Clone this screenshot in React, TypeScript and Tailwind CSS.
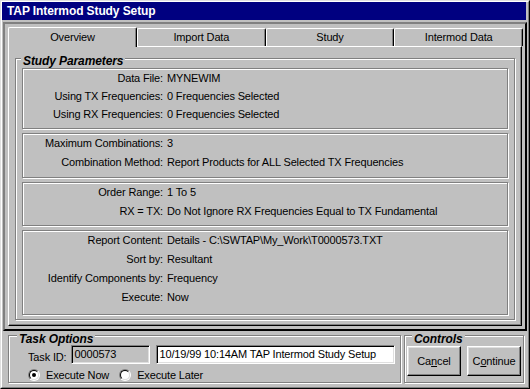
import * as React from "react";

// Win95-style "TAP Intermod Study Setup" dialog

const etched = "border border-[#808080] shadow-[inset_1px_1px_0_#fff,1px_1px_0_#fff]";
const raised =
  "border border-t-white border-l-white border-r-black border-b-black shadow-[inset_-1px_-1px_0_#808080,inset_1px_1px_0_#dfdfdf]";
const sunken =
  "border border-t-[#808080] border-l-[#808080] border-r-white border-b-white shadow-[inset_1px_1px_0_#000,inset_-1px_-1px_0_#dfdfdf]";

const TABS = ["Overview", "Import Data", "Study", "Intermod Data"];

const SECTIONS: { h: string; rows: [string, string][] }[] = [
  {
    h: "h-[61px]",
    rows: [
      ["Data File:", "MYNEWIM"],
      ["Using TX Frequencies:", "0 Frequencies Selected"],
      ["Using RX Frequencies:", "0 Frequencies Selected"],
    ],
  },
  {
    h: "h-[45px]",
    rows: [
      ["Maximum Combinations:", "3"],
      ["Combination Method:", "Report Products for ALL Selected TX Frequencies"],
    ],
  },
  {
    h: "h-[44px]",
    rows: [
      ["Order Range:", "1 To 5"],
      ["RX = TX:", "Do Not Ignore RX Frequencies Equal to TX Fundamental"],
    ],
  },
  {
    h: "h-[85px]",
    rows: [
      ["Report Content:", "Details - C:\\SWTAP\\My_Work\\T0000573.TXT"],
      ["Sort by:", "Resultant"],
      ["Identify Components by:", "Frequency"],
      ["Execute:", "Now"],
    ],
  },
];

function Caption({ children, className }: { children: React.ReactNode; className: string }) {
  return (
    <span
      className={`absolute bg-[#c0c0c0] px-[2px] text-[12px] leading-[12px] font-bold italic tracking-[-0.1px] ${className}`}
    >
      {children}
    </span>
  );
}

function Radio({ checked, label }: { checked?: boolean; label: string }) {
  return (
    <label className="flex items-center gap-[6px]">
      <span className="flex h-[12px] w-[12px] rounded-full border border-t-[#808080] border-l-[#808080] border-r-white border-b-white">
        <span className="flex flex-1 items-center justify-center rounded-full border border-t-black border-l-black border-r-[#dfdfdf] border-b-[#dfdfdf] bg-white">
          {checked && <span className="h-[4px] w-[4px] rounded-full bg-black" />}
        </span>
      </span>
      {label}
    </label>
  );
}

export default function App() {
  return (
    <div className="h-[389px] w-[530px] border border-t-[#dfdfdf] border-l-[#dfdfdf] border-r-black border-b-black bg-[#c0c0c0] font-['Liberation_Sans',Arial,sans-serif] text-[11px] tracking-[-0.15px] text-black">
      <div className="flex h-full flex-col border border-t-white border-l-white border-r-[#808080] border-b-[#808080]">
        {/* Title bar */}
        <div className="mr-[2px] flex h-[18px] items-center bg-[#000080] pl-[5px] text-[12px] font-bold tracking-[-0.1px] text-white">
          TAP Intermod Study Setup
        </div>

        {/* Tab control frame */}
        <div className="mt-[2px] ml-[1px] h-[309px] w-[524px] border-2 border-t-[#808080] border-l-[#808080] border-r-black border-b-black pt-[3px] pl-[3px]">
          <div className="flex h-[19px] w-[515px]">
            {TABS.map((t, i) => (
              <div
                key={t}
                className={
                  i === 0
                    ? "relative z-10 -mb-[1px] flex h-[20px] w-[129px] items-center justify-center rounded-t-[2px] border border-b-0 border-t-white border-l-white border-r-black bg-[#c0c0c0] shadow-[inset_-1px_0_0_#808080]"
                    : "mt-[1px] flex h-[18px] flex-1 items-center justify-center rounded-t-[2px] border border-b-0 border-t-white border-l-white border-r-black shadow-[inset_-1px_0_0_#808080]"
                }
              >
                {t}
              </div>
            ))}
          </div>

          {/* Tab panel */}
          <div className="h-[280px] w-[514px] border border-t-white border-l-white border-r-black border-b-black pt-[11px] pl-[6px] shadow-[inset_-1px_-1px_0_#808080]">
            <div className={`relative h-[262px] w-[500px] pt-[9px] pl-[6px] ${etched}`}>
              <Caption className="-top-[4px] left-[5px]">Study Parameters</Caption>
              <div className="flex flex-col gap-[4px]">
                {SECTIONS.map((s, si) => (
                  <div key={si} className={`w-[486px] ${s.h} ${etched}`}>
                    {s.rows.map(([k, v]) => (
                      <div key={k} className={`flex ${si === 0 ? "h-[18px]" : "h-[19px]"} items-center`}>
                        <span className="w-[140px] text-right">{k}</span>
                        <span className="ml-[4px]">{v}</span>
                      </div>
                    ))}
                  </div>
                ))}
              </div>
            </div>
          </div>
        </div>

        {/* Bottom groups */}
        <div className="mt-[4px] ml-[6px] flex gap-[3px]">
          <div className={`relative h-[48px] w-[393px] pt-[9px] pl-[19px] ${etched}`}>
            <Caption className="-top-[3px] left-[8px]">Task Options</Caption>
            <div className="flex items-end">
              <span className="mr-[4px] leading-[14px]">Task ID:</span>
              <div className={`flex h-[19px] w-[79px] items-center pl-[3px] ${sunken}`}>0000573</div>
              <div className={`ml-[6px] flex h-[19px] w-[239px] items-center bg-white pl-[3px] ${sunken}`}>
                10/19/99 10:14AM TAP Intermod Study Setup
              </div>
            </div>
            <div className="mt-[3px] flex gap-[10px]">
              <Radio checked label="Execute Now" />
              <Radio label="Execute Later" />
            </div>
          </div>
          <div className={`relative h-[48px] w-[120px] pt-[10px] pl-[2px] ${etched}`}>
            <Caption className="-top-[3px] left-[7px]">Controls</Caption>
            <div className="flex gap-[6px]">
              <button className={`h-[30px] w-[54px] bg-[#c0c0c0] ${raised}`}>
                Ca<u>n</u>cel
              </button>
              <button className={`h-[30px] w-[54px] bg-[#c0c0c0] ${raised}`}>
                C<u>o</u>ntinue
              </button>
            </div>
          </div>
        </div>
      </div>
    </div>
  );
}
